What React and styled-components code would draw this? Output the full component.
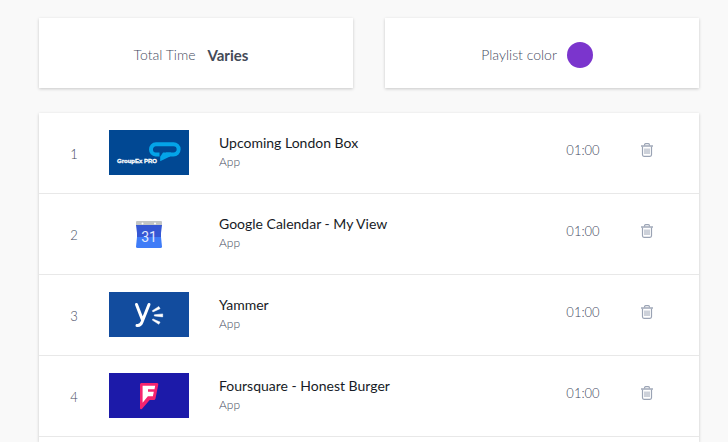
import React from "react";
import styled, { createGlobalStyle } from "styled-components";

const colors = {
  page: "#f9f9f9",
  card: "#ffffff",
  line: "#e8e8e8",
  title: "#171b26",
  strong: "#444a57",
  label: "#434a5e",
  icon: "#9aa3b4",
  playlist: "#7b35cd",
};

const GlobalStyle = createGlobalStyle`
  body {
    margin: 0;
    background-color: ${colors.page};
    font-family: Lato, "Liberation Sans", sans-serif;
    font-size: 14px;
  }
`;

const GroupExLogo = () => (
  <svg viewBox="0 0 80 45" role="img" aria-label="GroupEx PRO">
    <rect width="80" height="45" fill="#014893" />
    <path
      d="M50.500 24.500H46.500a4.500 5 0 0 1-4.500-5a5 5 0 0 1 5-5.300h17.500a5 5 0 0 1 0 10.300H57"
      fill="none"
      stroke="#04a4e8"
      strokeWidth="4"
    />
    <path d="M54 22.500h8l-1 4l-9.800 4.700v-4.500z" fill="#04a4e8" />
    <text
      x="8"
      y="33"
      fill="#ffffff"
      stroke="#ffffff"
      strokeWidth="0.3"
      fontFamily="'Liberation Sans', sans-serif"
      fontSize="6"
      fontWeight="bold"
    >
      GroupEx PRO
    </text>
  </svg>
);

const CalendarLogo = () => (
  <svg viewBox="0 0 80 45" role="img" aria-label="Google Calendar">
    <path d="M28 10h24a1 1 0 0 1 1 1v4H27v-4a1 1 0 0 1 1-1z" fill="#c3c5c4" />
    <circle cx="33.500" cy="12.500" r="1" fill="#ffffff" />
    <circle cx="46" cy="12.500" r="1" fill="#ffffff" />
    <path d="M27 14h26l-1 8v5H28v-5z" fill="#3557d4" />
    <path d="M28 26h24l1 9.500q0 1.500-1.500 1.500h-23q-1.500 0-1.500-1.500z" fill="#3f7cf7" />
    <text
      x="40"
      y="31"
      fill="#e3eafd"
      textAnchor="middle"
      fontFamily="Roboto, sans-serif"
      fontSize="14"
    >
      31
    </text>
  </svg>
);

const YammerLogo = () => (
  <svg viewBox="0 0 80 45" role="img" aria-label="Yammer">
    <rect width="80" height="45" fill="#124c9e" />
    <path
      d="M27.500 12.500l6 15.500M40 12.500l-7 17.500c-1 2.700-2.200 3.800-5 3.400"
      fill="none"
      stroke="#ffffff"
      strokeLinecap="round"
      strokeLinejoin="round"
      strokeWidth="3"
    />
    <path
      d="M43.300 18.700l6.500-4.200 1.300 2.200-7.200 3.200zM45.300 22.800l8.400-.9v3l-8.400-.9zM43.900 26.900l7.200 3.200-1.300 2.200-6.500-4.200z"
      fill="#ffffff"
      stroke="#ffffff"
      strokeLinejoin="round"
      strokeWidth="0.5"
    />
  </svg>
);

const FoursquareLogo = () => (
  <svg viewBox="0 0 80 45" role="img" aria-label="Foursquare">
    <rect width="80" height="45" fill="#1c1aa9" />
    <path
      d="M32.300 10h15.700q1.700 0 1.300 1.600l-2.800 13.800q-.4 1.500-1.800 1.500h-4l-7.800 9q-1.900 1.200-1.900-1V11.500q0-1.500 1.300-1.500z"
      fill="#f5246f"
    />
    <path
      d="M33.600 12.800h12.600l-.7 3.400h-6.500v2.500h5.800l-.9 4.500h-5l-5.300 6.500z"
      fill="#ffffff"
    />
  </svg>
);

const TrashIcon = () => (
  <svg width="12" height="14" viewBox="0 0 12 14" fill="none" stroke="currentColor" aria-hidden="true">
    <path d="M0 3h12" strokeWidth="1.400" />
    <path d="M3.500 2.500q0-1.800 1.200-1.800h2.600q1.200 0 1.200 1.800M1.500 3.500v8.300q0 1.500 1.500 1.500h6q1.500 0 1.500-1.500V3.500" strokeWidth="1.200" />
    <path d="M4 5.500v5.500M6 5.500v5.500M8 5.500v5.500" />
  </svg>
);

const items = [
  { name: "Upcoming London Box", type: "App", time: "01:00", Logo: GroupExLogo },
  { name: "Google Calendar - My View", type: "App", time: "01:00", Logo: CalendarLogo },
  { name: "Yammer", type: "App", time: "01:00", Logo: YammerLogo },
  { name: "Foursquare - Honest Burger", type: "App", time: "01:00", Logo: FoursquareLogo },
];

const PlaylistItem = ({ item, number }) => {
  const { name, type, time, Logo } = item;
  return (
    <ItemRow>
      <ItemNumber>{number}</ItemNumber>
      <Thumbnail>
        <Logo />
      </Thumbnail>
      <ItemText>
        <ItemName>{name}</ItemName>
        <ItemType>{type}</ItemType>
      </ItemText>
      <ItemTime>{time}</ItemTime>
      <DeleteButton type="button" aria-label={`Delete ${name}`}>
        <TrashIcon />
      </DeleteButton>
    </ItemRow>
  );
};

const App = () => {
  return (
    <>
      <GlobalStyle />
      <Page>
        <Summary>
          <SummaryCard>
            <SummaryLabel>Total Time</SummaryLabel>
            <SummaryValue>Varies</SummaryValue>
          </SummaryCard>
          <SummaryCard>
            <SummaryLabel id="playlist-color">Playlist color</SummaryLabel>
            <ColorButton type="button" aria-labelledby="playlist-color" color={colors.playlist} />
          </SummaryCard>
        </Summary>
        <ItemList>
          {items.map((item, index) => (
            <PlaylistItem key={item.name} item={item} number={index + 1} />
          ))}
        </ItemList>
      </Page>
    </>
  );
};
export default App;

const Page = styled.main`
  display: flex;
  flex-direction: column;
  gap: 25px;
  padding: 18px 29px 0 39px;
`;

const Summary = styled.section`
  display: grid;
  grid-template-columns: 1fr 1fr;
  gap: 32px;
`;

const SummaryCard = styled.div`
  display: flex;
  align-items: center;
  justify-content: center;
  min-height: 70px;
  padding: 4px 10px 0 0;
  box-sizing: border-box;
  background-color: ${colors.card};
  box-shadow: 0 1px 3px rgba(0, 0, 0, 0.2);
`;

const SummaryLabel = styled.span`
  color: ${colors.label};
  font-size: 14px;
  font-weight: 300;
  line-height: 20px;
`;

const SummaryValue = styled.strong`
  margin-left: 12px;
  color: ${colors.strong};
  font-size: 15px;
  font-weight: 700;
  line-height: 20px;
`;

const ColorButton = styled.button`
  width: 26px;
  height: 26px;
  margin-left: 10px;
  padding: 0;
  border: 0;
  border-radius: 50%;
  background-color: ${(props) => props.color};
  cursor: pointer;
`;

const ItemList = styled.ol`
  margin: 0;
  padding: 0 0 5px;
  list-style: none;
  background-color: ${colors.card};
  box-shadow: 0 1px 3px rgba(0, 0, 0, 0.2);
`;

const ItemRow = styled.li`
  display: grid;
  grid-template-columns: 70px 80px 1fr 64px 64px;
  align-items: start;
  padding: 17px 20px 18px 0;
  border-bottom: 1px solid ${colors.line};
`;

const ItemNumber = styled.span`
  padding-top: 14px;
  color: ${colors.label};
  font-size: 13px;
  font-weight: 300;
  line-height: 20px;
  text-align: center;
`;

const Thumbnail = styled.div`
  height: 45px;

  svg {
    display: block;
    width: 100%;
    height: 100%;
  }
`;

const ItemText = styled.div`
  padding: 4px 0 0 30px;
`;

const ItemName = styled.div`
  color: ${colors.title};
  font-size: 14px;
  line-height: 18px;
`;

const ItemType = styled.div`
  color: ${colors.label};
  font-size: 12px;
  font-weight: 300;
  line-height: 20px;
`;

const ItemTime = styled.time`
  padding-top: 10px;
  color: ${colors.label};
  font-size: 13px;
  font-weight: 300;
  line-height: 20px;
  text-align: center;
`;

const DeleteButton = styled.button`
  justify-self: center;
  margin-top: 9px;
  padding: 4px;
  border: 0;
  background: none;
  color: ${colors.icon};
  cursor: pointer;

  svg {
    display: block;
  }
`;
